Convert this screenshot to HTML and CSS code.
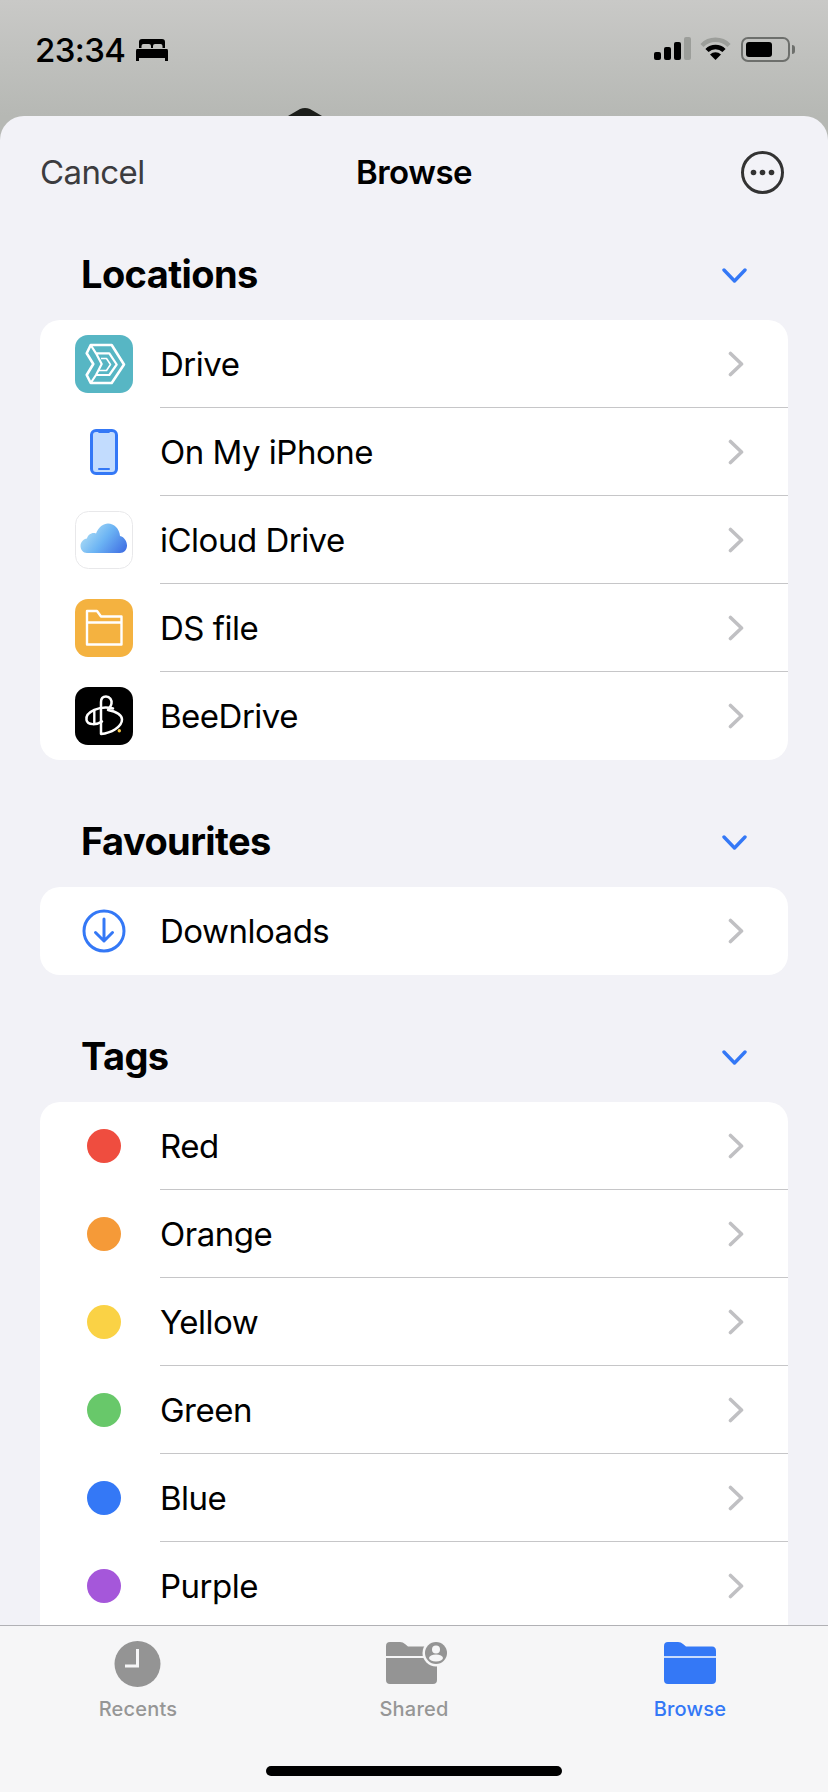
FILE: index.html
```html
<!DOCTYPE html>
<html lang="en">
<head>
    <meta charset="UTF-8">
    <meta name="viewport" content="width=device-width, initial-scale=1.0">
    <title>Browse</title>
    <link rel="stylesheet" href="styles.css">
</head>
<body>
<div class="phone">

    <div class="status-bar">
        <svg class="peek" width="34" height="8" viewBox="0 0 34 8"><path d="M0 8 L12 1 Q17 -1 22 1 L34 8 Z" fill="#1c1e1a"/></svg>
        <div class="status-left">
            <span class="time">23:34</span>
            <svg width="32" height="22" viewBox="0 0 32 22"><path d="M3 9 V3 Q3 0 6 0 H26 Q29 0 29 3 V9 H26.500 V7 Q26.500 5 24.500 5 H19 Q17 5 17 7 V9 H15 V7 Q15 5 13 5 H7.500 Q5.500 5 5.500 7 V9 Z M1 10 H31 Q32 10 32 12 V22 H29 V19 H3 V22 H0 V12 Q0 10 1 10 Z" fill="#000"/></svg>
        </div>
        <div class="status-right">
            <svg class="signal" width="37" height="23" viewBox="0 0 37 23">
                <rect x="0" y="15" width="7" height="8" rx="2" fill="#000"/>
                <rect x="10" y="10" width="7" height="13" rx="2" fill="#000"/>
                <rect x="20" y="5" width="7" height="18" rx="2" fill="#000"/>
                <rect x="30" y="0" width="7" height="23" rx="2" fill="#9c9e9a"/>
            </svg>
            <svg width="31" height="23" viewBox="0 0 31 23">
                <path d="M2 8.500 A19 19 0 0 1 29 8.500" fill="none" stroke="#9c9e9a" stroke-width="4.500"/>
                <path d="M7 13.500 A12 12 0 0 1 24 13.500" fill="none" stroke="#000" stroke-width="4.500"/>
                <path d="M15.500 23 L10 17.500 A8 8 0 0 1 21 17.500 Z" fill="#000"/>
            </svg>
            <div class="battery"><div class="battery-level"></div></div>
        </div>
    </div>

    <div class="sheet">
        <div class="nav">
            <span class="cancel">Cancel</span>
            <span class="nav-title">Browse</span>
            <svg width="43" height="43" viewBox="0 0 43 43">
                <circle cx="21.500" cy="21.500" r="20" fill="none" stroke="#333" stroke-width="3"/>
                <circle cx="12.500" cy="21.500" r="2.800" fill="#333"/>
                <circle cx="21.500" cy="21.500" r="2.800" fill="#333"/>
                <circle cx="30.500" cy="21.500" r="2.800" fill="#333"/>
            </svg>
        </div>

        <div class="section-head">
            <h2>Locations</h2>
            <svg class="chevron-down" width="25" height="15" viewBox="0 0 25 15"><path d="M2 2 L12.500 13 L23 2" fill="none" stroke="#3478f6" stroke-width="3.400" stroke-linecap="round" stroke-linejoin="round"/></svg>
        </div>
        <div class="card">
            <div class="row">
                <svg class="row-icon" width="58" height="58" viewBox="0 0 58 58">
                    <rect width="58" height="58" rx="13" fill="#57b6c4"/>
                    <path d="M15.700 10 H36.700 L49 29.500 L36.700 48 H15.700 L11.700 40 L18.300 29 L11.700 18.300 Z" fill="none" stroke="#fff" stroke-width="2.600" stroke-linejoin="round"/>
                    <path d="M15.700 10 L21 18.300 H34.300 L41.700 29.500 L34.300 40 H21 L15.700 48 M21 18.300 L26.700 29 L21 40" fill="none" stroke="#fff" stroke-width="2.200" stroke-linejoin="round"/>
                    <path d="M26 23.500 H31.500 L35.500 29.500 L31.500 35.500 H24" fill="none" stroke="#fff" stroke-width="1.600" stroke-linejoin="round"/>
                </svg>
                <div class="row-body"><span>Drive</span><svg width="16" height="26" viewBox="0 0 16 26"><path d="M2.500 2.500 L13.500 13 L2.500 23.500" fill="none" stroke="#c0c0c3" stroke-width="3.600" stroke-linecap="round" stroke-linejoin="round"/></svg></div>
            </div>
            <div class="row">
                <svg class="row-icon" width="58" height="58" viewBox="0 0 58 58">
                    <rect x="16.500" y="7.500" width="25" height="43" rx="4.500" fill="#c2dcfe" stroke="#3478f6" stroke-width="3"/>
                    <rect x="23" y="7" width="12" height="3" rx="1.500" fill="#3478f6"/>
                    <rect x="23" y="45" width="12" height="2" rx="1" fill="#3478f6"/>
                </svg>
                <div class="row-body"><span>On My iPhone</span><svg width="16" height="26" viewBox="0 0 16 26"><path d="M2.500 2.500 L13.500 13 L2.500 23.500" fill="none" stroke="#c0c0c3" stroke-width="3.600" stroke-linecap="round" stroke-linejoin="round"/></svg></div>
            </div>
            <div class="row">
                <svg class="row-icon" width="58" height="58" viewBox="0 0 58 58">
                    <defs><linearGradient id="cloud" x1="0" y1="0.300" x2="1" y2="0.800"><stop offset="0" stop-color="#b2e0f5"/><stop offset="0.500" stop-color="#6cb4f4"/><stop offset="1" stop-color="#4273e4"/></linearGradient></defs>
                    <rect x="0.500" y="0.500" width="57" height="57" rx="13" fill="#fff" stroke="#e8e8ea"/>
                    <path d="M12 42 C8 42 5.500 38.500 5.500 35 C5.500 31 8.500 28 12 27.500 C13 23.500 17 21 21 22.500 C23.500 16 28.500 12.500 33 12.500 C39 12.500 44.500 17.500 45 25 C49.500 26 52 30.500 52 34.500 C52 39 49 42 45 42 Z" fill="url(#cloud)"/>
                </svg>
                <div class="row-body"><span>iCloud Drive</span><svg width="16" height="26" viewBox="0 0 16 26"><path d="M2.500 2.500 L13.500 13 L2.500 23.500" fill="none" stroke="#c0c0c3" stroke-width="3.600" stroke-linecap="round" stroke-linejoin="round"/></svg></div>
            </div>
            <div class="row">
                <svg class="row-icon" width="58" height="58" viewBox="0 0 58 58">
                    <rect width="58" height="58" rx="13" fill="#f4b240"/>
                    <path d="M12 12 H22 L26 17.500 H46.500 V45.500 H12 Z M12 23.500 H46.500" fill="none" stroke="#fff" stroke-width="2.400" stroke-linejoin="round"/>
                </svg>
                <div class="row-body"><span>DS file</span><svg width="16" height="26" viewBox="0 0 16 26"><path d="M2.500 2.500 L13.500 13 L2.500 23.500" fill="none" stroke="#c0c0c3" stroke-width="3.600" stroke-linecap="round" stroke-linejoin="round"/></svg></div>
            </div>
            <div class="row">
                <svg class="row-icon" width="58" height="58" viewBox="0 0 58 58">
                    <rect width="58" height="58" rx="13" fill="#000"/>
                    <path d="M26 47 V15 C26 11 28 9.500 31 9.500 C35 9.500 37 13 36.500 16.500 C36 20 34 21 33 23 C40 24.500 47 27 47 32.500 C47 40 36 46 26 47 Z" fill="none" stroke="#fff" stroke-width="2.500" stroke-linejoin="round"/>
                    <path d="M38 21.500 C25 18 10 25 11.500 33 C12.500 38.500 22 38 27 34.500" fill="none" stroke="#fff" stroke-width="2.500" stroke-linecap="round"/>
                    <path d="M19.300 23 V37" stroke="#fff" stroke-width="2.400"/>
                    <circle cx="44.300" cy="43.700" r="1.700" fill="#f4c43f"/>
                </svg>
                <div class="row-body"><span>BeeDrive</span><svg width="16" height="26" viewBox="0 0 16 26"><path d="M2.500 2.500 L13.500 13 L2.500 23.500" fill="none" stroke="#c0c0c3" stroke-width="3.600" stroke-linecap="round" stroke-linejoin="round"/></svg></div>
            </div>
        </div>

        <div class="section-head next">
            <h2>Favourites</h2>
            <svg class="chevron-down" width="25" height="15" viewBox="0 0 25 15"><path d="M2 2 L12.500 13 L23 2" fill="none" stroke="#3478f6" stroke-width="3.400" stroke-linecap="round" stroke-linejoin="round"/></svg>
        </div>
        <div class="card">
            <div class="row">
                <svg class="row-icon" width="58" height="58" viewBox="0 0 58 58">
                    <circle cx="29" cy="29" r="20" fill="none" stroke="#3478f6" stroke-width="3"/>
                    <path d="M29 17 V39 M20.500 30.500 L29 39 L37.500 30.500" fill="none" stroke="#3478f6" stroke-width="3" stroke-linecap="round" stroke-linejoin="round"/>
                </svg>
                <div class="row-body"><span>Downloads</span><svg width="16" height="26" viewBox="0 0 16 26"><path d="M2.500 2.500 L13.500 13 L2.500 23.500" fill="none" stroke="#c0c0c3" stroke-width="3.600" stroke-linecap="round" stroke-linejoin="round"/></svg></div>
            </div>
        </div>

        <div class="section-head next">
            <h2>Tags</h2>
            <svg class="chevron-down" width="25" height="15" viewBox="0 0 25 15"><path d="M2 2 L12.500 13 L23 2" fill="none" stroke="#3478f6" stroke-width="3.400" stroke-linecap="round" stroke-linejoin="round"/></svg>
        </div>
        <div class="card card-open">
            <div class="row">
                <div class="row-icon tag-box"><div class="tag tag-red"></div></div>
                <div class="row-body"><span>Red</span><svg width="16" height="26" viewBox="0 0 16 26"><path d="M2.500 2.500 L13.500 13 L2.500 23.500" fill="none" stroke="#c0c0c3" stroke-width="3.600" stroke-linecap="round" stroke-linejoin="round"/></svg></div>
            </div>
            <div class="row">
                <div class="row-icon tag-box"><div class="tag tag-orange"></div></div>
                <div class="row-body"><span>Orange</span><svg width="16" height="26" viewBox="0 0 16 26"><path d="M2.500 2.500 L13.500 13 L2.500 23.500" fill="none" stroke="#c0c0c3" stroke-width="3.600" stroke-linecap="round" stroke-linejoin="round"/></svg></div>
            </div>
            <div class="row">
                <div class="row-icon tag-box"><div class="tag tag-yellow"></div></div>
                <div class="row-body"><span>Yellow</span><svg width="16" height="26" viewBox="0 0 16 26"><path d="M2.500 2.500 L13.500 13 L2.500 23.500" fill="none" stroke="#c0c0c3" stroke-width="3.600" stroke-linecap="round" stroke-linejoin="round"/></svg></div>
            </div>
            <div class="row">
                <div class="row-icon tag-box"><div class="tag tag-green"></div></div>
                <div class="row-body"><span>Green</span><svg width="16" height="26" viewBox="0 0 16 26"><path d="M2.500 2.500 L13.500 13 L2.500 23.500" fill="none" stroke="#c0c0c3" stroke-width="3.600" stroke-linecap="round" stroke-linejoin="round"/></svg></div>
            </div>
            <div class="row">
                <div class="row-icon tag-box"><div class="tag tag-blue"></div></div>
                <div class="row-body"><span>Blue</span><svg width="16" height="26" viewBox="0 0 16 26"><path d="M2.500 2.500 L13.500 13 L2.500 23.500" fill="none" stroke="#c0c0c3" stroke-width="3.600" stroke-linecap="round" stroke-linejoin="round"/></svg></div>
            </div>
            <div class="row">
                <div class="row-icon tag-box"><div class="tag tag-purple"></div></div>
                <div class="row-body"><span>Purple</span><svg width="16" height="26" viewBox="0 0 16 26"><path d="M2.500 2.500 L13.500 13 L2.500 23.500" fill="none" stroke="#c0c0c3" stroke-width="3.600" stroke-linecap="round" stroke-linejoin="round"/></svg></div>
            </div>
        </div>
    </div>

    <div class="tab-bar">
        <div class="tabs">
            <div class="tab">
                <svg width="48" height="48" viewBox="0 0 48 48">
                    <circle cx="23.500" cy="24" r="23" fill="#949494"/>
                    <path d="M23.500 9 V26 H11" fill="none" stroke="#f6f6f7" stroke-width="3"/>
                </svg>
                <span>Recents</span>
            </div>
            <div class="tab tab-shared">
                <svg width="64" height="48" viewBox="0 0 64 48">
                    <path d="M0 6 Q0 2 4 2 H14 Q17 2 19 4 L22 6.500 H47 Q51 6.500 51 11 V40 Q51 44 47 44 H4 Q0 44 0 40 Z" fill="#949494"/>
                    <path d="M0 17 H51" stroke="#f6f6f7" stroke-width="2"/>
                    <circle cx="50" cy="13" r="13.500" fill="#f6f6f7"/>
                    <circle cx="50" cy="13" r="11" fill="#949494"/>
                    <circle cx="50" cy="9.500" r="4" fill="#f6f6f7"/>
                    <ellipse cx="50" cy="18" rx="7" ry="3.500" fill="#f6f6f7"/>
                </svg>
                <span>Shared</span>
            </div>
            <div class="tab tab-active">
                <svg width="52" height="48" viewBox="0 0 52 48">
                    <path d="M0 6 Q0 2 4 2 H14 Q17 2 19 4 L22 6.500 H48 Q52 6.500 52 11 V40 Q52 44 48 44 H4 Q0 44 0 40 Z" fill="#3478f6"/>
                    <path d="M0 17 H52" stroke="#c9dcfc" stroke-width="2"/>
                </svg>
                <span>Browse</span>
            </div>
        </div>
        <div class="home-bar"></div>
    </div>

</div>
</body>
</html>
```

FILE: styles.css
```css
html, body {
    margin: 0;
    padding: 0;
}
body {
    font-family: Inter, "Noto Sans", sans-serif;
    color: #000;
}
.phone {
    width: 828px;
    height: 1792px;
    display: flex;
    flex-direction: column;
    overflow: hidden;
    background: linear-gradient(#c9c9c7, #b6b8b4 116px);
}

/* status bar */
.status-bar {
    height: 116px;
    flex: none;
    position: relative;
    display: flex;
    justify-content: space-between;
    padding: 37px 38px 0 35px;
    box-sizing: border-box;
}
.peek {
    position: absolute;
    left: 288px;
    top: 108px;
}
.status-left {
    display: flex;
    align-items: flex-start;
    gap: 11px;
}
.status-left svg {
    margin-top: 2px;
}
.time {
    font-size: 33px;
    line-height: 26px;
    font-weight: 500;
    letter-spacing: -0.6px;
}
.status-right {
    display: flex;
    align-items: flex-start;
    gap: 10px;
}
.signal {
    margin-right: -1px;
}
.battery {
    width: 49px;
    height: 25px;
    box-sizing: border-box;
    border: 2px solid #6d6f6c;
    border-radius: 7px;
    padding: 3px;
    position: relative;
}
.battery::after {
    content: "";
    position: absolute;
    right: -7px;
    top: 6px;
    width: 3px;
    height: 9px;
    background: #6d6f6c;
    border-radius: 0 3px 3px 0;
}
.battery-level {
    width: 26px;
    height: 100%;
    background: #000;
    border-radius: 3px;
}

/* sheet */
.sheet {
    flex: 1;
    min-height: 0;
    overflow: hidden;
    background: #f2f2f7;
    border-radius: 24px 24px 0 0;
}
.nav {
    height: 112px;
    padding: 0 44px 0 40px;
    display: flex;
    align-items: center;
    justify-content: space-between;
    position: relative;
}
.cancel {
    font-size: 33px;
    letter-spacing: -0.6px;
    color: #3c3c3f;
}
.nav-title {
    position: absolute;
    left: 0;
    right: 0;
    text-align: center;
    font-size: 33px;
    font-weight: 600;
    letter-spacing: -0.5px;
}
.section-head {
    height: 92px;
    padding: 0 81px 0 81px;
    display: flex;
    align-items: center;
    justify-content: space-between;
}
.section-head.next {
    margin-top: 35px;
}
.section-head h2 {
    margin: 0;
    font-size: 38px;
    font-weight: 700;
    letter-spacing: -0.6px;
}
.chevron-down {
    margin-top: 2px;
}
.card {
    margin: 0 40px;
    background: #fff;
    border-radius: 20px;
    overflow: hidden;
}
/* list runs on under the tab bar */
.card-open {
    padding-bottom: 40px;
}
.row {
    height: 88px;
    display: flex;
    align-items: stretch;
    padding-left: 35px;
}
.row-icon {
    flex: none;
    width: 58px;
    height: 58px;
    align-self: center;
}
.row-body {
    flex: 1;
    margin-left: 27px;
    padding-right: 44px;
    display: flex;
    align-items: center;
    justify-content: space-between;
    border-bottom: 1px solid #c6c6c8;
    font-size: 33px;
    letter-spacing: -0.5px;
}
.row:last-child .row-body {
    border-bottom: none;
}
.tag-box {
    display: flex;
    align-items: center;
    justify-content: center;
}
.tag {
    width: 34px;
    height: 34px;
    border-radius: 50%;
}
.tag-red { background: #ef4d3f; }
.tag-orange { background: #f59a38; }
.tag-yellow { background: #fad245; }
.tag-green { background: #68c86a; }
.tag-blue { background: #3478f6; }
.tag-purple { background: #a557da; }

/* tab bar */
.tab-bar {
    height: 167px;
    flex: none;
    box-sizing: border-box;
    border-top: 1px solid #b1b1b5;
    background: #f6f6f7;
    display: flex;
    flex-direction: column;
    align-items: center;
}
.tabs {
    width: 100%;
    display: grid;
    grid-template-columns: repeat(3, 1fr);
    padding-top: 14px;
}
.tab {
    display: flex;
    flex-direction: column;
    align-items: center;
    gap: 9px;
    font-size: 20px;
    line-height: 24px;
    font-weight: 500;
    letter-spacing: 0.2px;
    color: #969696;
}
.tab svg {
    display: block;
}
.tab-shared svg {
    margin-left: 8px;
}
.tab-active {
    color: #3478f6;
}
.home-bar {
    width: 296px;
    height: 10px;
    margin-top: auto;
    margin-bottom: 16px;
    background: #000;
    border-radius: 5px;
}
```
